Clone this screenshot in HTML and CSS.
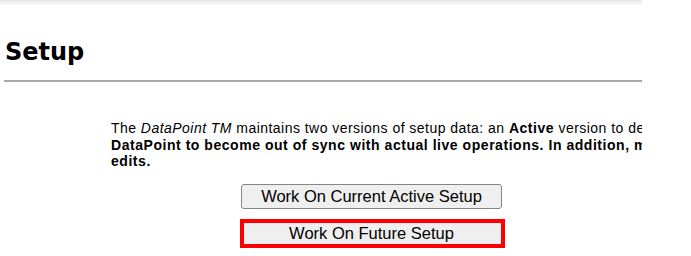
FILE: index.html
```html
<!DOCTYPE html>
<html lang="en">
<head>
    <meta charset="UTF-8">
    <title>Setup</title>
    <link rel="stylesheet" href="styles.css">
</head>
<body>
    <div class="page">
        <div class="top-shadow"></div>

        <h1 class="page-title">Setup</h1>
        <hr class="title-rule">

        <section class="intro">
            <p>
                The <em>DataPoint TM</em> maintains two versions of setup data: an <strong>Active</strong> version to define current live operations, and a <strong>Future</strong> version for planned changes.<br>
                <strong>DataPoint to become out of sync with actual live operations. In addition, making changes to the Active setup will take effect immediately on all</strong><br>
                <strong>edits.</strong>
            </p>
        </section>

        <div class="actions">
            <button type="button" class="setup-btn">Work On Current Active Setup</button>
            <button type="button" class="setup-btn highlight">Work On Future Setup</button>
        </div>
    </div>
</body>
</html>
```

FILE: styles.css
```css
* {
    box-sizing: border-box;
    margin: 0;
    padding: 0;
}

body {
    background: #fff;
    color: #000;
    font-family: 'Liberation Sans', Arial, sans-serif;
}

.page {
    width: 642px;
    height: 256px;
    overflow: hidden;
}

.top-shadow {
    height: 6px;
    background: linear-gradient(#e6e6e6, #fff);
}

.page-title {
    font-family: 'DejaVu Sans', Verdana, sans-serif;
    font-size: 24px;
    font-weight: bold;
    line-height: 30px;
    margin: 31px 0 0 5px;
}

.title-rule {
    border: 0;
    border-top: 2px solid #a8a8a8;
    margin: 13px 0 0 4px;
}

.intro {
    padding: 38px 0 0 111px;
    width: 1200px;
}

.intro p {
    font-size: 14px;
    line-height: 16.5px;
    letter-spacing: 0.46px;
    white-space: nowrap;
}

.intro strong {
    letter-spacing: 0.54px;
}

.actions {
    display: flex;
    flex-direction: column;
    align-items: flex-start;
    gap: 12px;
    padding: 14px 0 0 241px;
}

.setup-btn {
    width: 261px;
    height: 25px;
    font-family: 'Liberation Sans', Arial, sans-serif;
    font-size: 16.5px;
    color: #000;
    background: #efefef;
    border: 1px solid #858585;
    border-radius: 3px;
}

.setup-btn.highlight {
    position: relative;
}

.setup-btn.highlight::after {
    content: "";
    position: absolute;
    top: -3px;
    right: -4px;
    bottom: -3px;
    left: -2px;
    border: 4px solid #f00;
}
```
